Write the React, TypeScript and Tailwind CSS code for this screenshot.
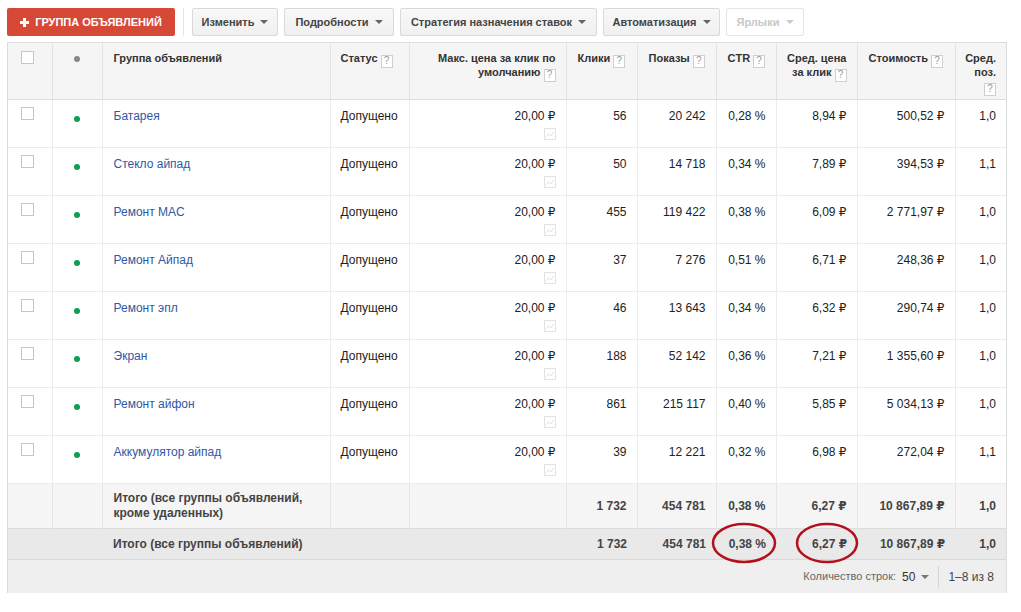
import React from "react";

const rows = [
  { name: "Батарея", clicks: "56", shows: "20 242", ctr: "0,28 %", cpc: "8,94 ₽", cost: "500,52 ₽", pos: "1,0" },
  { name: "Стекло айпад", clicks: "50", shows: "14 718", ctr: "0,34 %", cpc: "7,89 ₽", cost: "394,53 ₽", pos: "1,1" },
  { name: "Ремонт MAC", clicks: "455", shows: "119 422", ctr: "0,38 %", cpc: "6,09 ₽", cost: "2 771,97 ₽", pos: "1,0" },
  { name: "Ремонт Айпад", clicks: "37", shows: "7 276", ctr: "0,51 %", cpc: "6,71 ₽", cost: "248,36 ₽", pos: "1,0" },
  { name: "Ремонт эпл", clicks: "46", shows: "13 643", ctr: "0,34 %", cpc: "6,32 ₽", cost: "290,74 ₽", pos: "1,0" },
  { name: "Экран", clicks: "188", shows: "52 142", ctr: "0,36 %", cpc: "7,21 ₽", cost: "1 355,60 ₽", pos: "1,0" },
  { name: "Ремонт айфон", clicks: "861", shows: "215 117", ctr: "0,40 %", cpc: "5,85 ₽", cost: "5 034,13 ₽", pos: "1,0" },
  { name: "Аккумулятор айпад", clicks: "39", shows: "12 221", ctr: "0,32 %", cpc: "6,98 ₽", cost: "272,04 ₽", pos: "1,1" },
];

function Help() {
  return (
    <span className="ml-[3px] inline-flex h-[13px] w-[12px] items-center justify-center border border-[#cfcfcf] bg-white align-[-2px] text-[10px] font-normal leading-none text-[#999]">
      ?
    </span>
  );
}

function Caret({ color = "#555" }: { color?: string }) {
  return (
    <svg width="8" height="4" viewBox="0 0 8 4" className="ml-[6px] inline-block">
      <path d="M0 0h8L4 4z" fill={color} />
    </svg>
  );
}

function Check() {
  return <span className="inline-block h-[13px] w-[13px] border border-[#c6c6c6] bg-white" />;
}

function ToolButton({ label, w, disabled }: { label: string; w: string; disabled?: boolean }) {
  return (
    <button
      className={`flex h-[28px] items-center justify-center rounded-[2px] border text-[11px] font-bold ${w} ${
        disabled
          ? "border-[#e5e5e5] bg-white text-[#c8c8c8]"
          : "border-[#d9d9d9] bg-gradient-to-b from-[#f8f8f8] to-[#f0f0f0] text-[#444]"
      }`}
    >
      {label}
      <Caret color={disabled ? "#ccc" : "#666"} />
    </button>
  );
}

function ChartIcon() {
  return (
    <svg width="12" height="12" viewBox="0 0 12 12" className="ml-auto mt-[3px] block">
      <rect x="0.5" y="0.5" width="11" height="11" fill="#fff" stroke="#e2e2e2" />
      <path d="M2 9l3-3 2 2 3-4" fill="none" stroke="#e0e0e0" strokeWidth="1" />
    </svg>
  );
}

const td = "border-r border-[#ececec] align-top pt-[7px]";
const tt = "border-r border-[#e6e6e6] align-middle";
const th = "border-r border-[#e2e2e2] align-top pt-[8px] text-[11px] font-bold text-[#333] leading-[14px]";

export default function App() {
  return (
    <div className="relative h-[612px] w-[1021px] bg-white font-['Liberation_Sans','DejaVu_Sans',Arial,sans-serif] text-[12px] text-[#222]">
      {/* toolbar */}
      <div className="flex h-[42px] items-start px-[7px] pt-[8px]">
        <button className="flex h-[28px] w-[168px] items-center justify-center rounded-[2px] bg-[#d64937] text-[11px] font-bold text-white">
          <svg width="9" height="9" viewBox="0 0 9 9" className="mr-[6px]">
            <path d="M3 0h3v3h3v3H6v3H3V6H0V3h3z" fill="#fff" />
          </svg>
          ГРУППА ОБЪЯВЛЕНИЙ
        </button>
        <div className="mx-[8px] h-[28px] w-px bg-[#e5e5e5]" />
        <div className="flex gap-[6px]">
          <ToolButton label="Изменить" w="w-[86px]" />
          <ToolButton label="Подробности" w="w-[110px]" />
          <ToolButton label="Стратегия назначения ставок" w="w-[197px]" />
          <ToolButton label="Автоматизация" w="w-[117px]" />
          <ToolButton label="Ярлыки" w="w-[78px]" disabled />
        </div>
      </div>

      {/* table */}
      <div className="mx-[7px] w-[1000px] border-x border-[#dcdcdc]">
        <table className="w-full table-fixed border-collapse">
          <colgroup>
            <col className="w-[44px]" />
            <col className="w-[50px]" />
            <col className="w-[228px]" />
            <col className="w-[79px]" />
            <col className="w-[157px]" />
            <col className="w-[71px]" />
            <col className="w-[79px]" />
            <col className="w-[60px]" />
            <col className="w-[81px]" />
            <col className="w-[98px]" />
            <col className="w-[51px]" />
          </colgroup>
          <thead>
            <tr className="h-[57px] border-y border-[#dcdcdc] bg-[#f5f5f5]">
              <th className={`${th} pl-[13px] text-left`}>
                <Check />
              </th>
              <th className={`${th} text-center`}>
                <span className="mt-[4px] inline-block h-[6px] w-[6px] rounded-full bg-[#888]" />
              </th>
              <th className={`${th} pl-[11px] text-left`}>Группа объявлений</th>
              <th className={`${th} pl-[10px] text-left`}>
                Статус<Help />
              </th>
              <th className={`${th} pr-[10px] text-right`}>
                Макс. цена за клик по
                <br />
                умолчанию<Help />
              </th>
              <th className={`${th} pl-[11px] text-left`}>
                Клики<Help />
              </th>
              <th className={`${th} pl-[11px] text-left`}>
                Показы<Help />
              </th>
              <th className={`${th} pl-[11px] text-left`}>
                CTR<Help />
              </th>
              <th className={`${th} pr-[10px] text-right`}>
                Сред. цена
                <br />
                за клик<Help />
              </th>
              <th className={`${th} pl-[11px] text-left`}>
                Стоимость<Help />
              </th>
              <th className={`${th} border-r-0 pr-[10px] text-right`}>
                Сред.
                <br />
                поз.
                <br />
                <Help />
              </th>
            </tr>
          </thead>
          <tbody>
            {rows.map((r) => (
              <tr key={r.name} className="h-[48px] border-b border-[#ebebeb] bg-white">
                <td className={`${td} pl-[13px]`}>
                  <Check />
                </td>
                <td className={`${td} text-center`}>
                  <span className="mt-[9px] inline-block h-[6px] w-[6px] rounded-full bg-[#0f9d58]" />
                </td>
                <td className={`${td} pl-[11px] text-[#2f57a6]`}>{r.name}</td>
                <td className={`${td} pl-[10px]`}>Допущено</td>
                <td className={`${td} pr-[10px] text-right`}>
                  20,00 ₽
                  <ChartIcon />
                </td>
                <td className={`${td} pr-[10px] text-right`}>{r.clicks}</td>
                <td className={`${td} pr-[10px] text-right`}>{r.shows}</td>
                <td className={`${td} pr-[10px] text-right`}>{r.ctr}</td>
                <td className={`${td} pr-[10px] text-right`}>{r.cpc}</td>
                <td className={`${td} pr-[10px] text-right`}>{r.cost}</td>
                <td className={`${td} border-r-0 pr-[10px] text-right`}>{r.pos}</td>
              </tr>
            ))}
            <tr className="h-[45px] border-b border-[#dcdcdc] bg-[#f5f5f5] font-bold text-[#444]">
              <td className={tt} />
              <td className={tt} />
              <td className={`${tt} pl-[11px] leading-[15px]`}>
                Итого (все группы объявлений,
                <br />
                кроме удаленных)
              </td>
              <td className={tt} />
              <td className={tt} />
              <td className={`${tt} pr-[10px] text-right`}>1 732</td>
              <td className={`${tt} pr-[10px] text-right`}>454 781</td>
              <td className={`${tt} pr-[10px] text-right`}>0,38 %</td>
              <td className={`${tt} pr-[10px] text-right`}>6,27 ₽</td>
              <td className={`${tt} pr-[10px] text-right`}>10 867,89 ₽</td>
              <td className={`${tt} border-r-0 pr-[10px] text-right`}>1,0</td>
            </tr>
            <tr className="h-[31px] border-b border-[#d9d9d9] bg-[#e9e9e9] font-bold text-[#444]">
              <td />
              <td />
              <td colSpan={3} className="pl-[11px] align-middle">
                Итого (все группы объявлений)
              </td>
              <td className="pr-[10px] text-right align-middle">1 732</td>
              <td className="pr-[10px] text-right align-middle">454 781</td>
              <td className="pr-[10px] text-right align-middle">0,38 %</td>
              <td className="pr-[10px] text-right align-middle">6,27 ₽</td>
              <td className="pr-[10px] text-right align-middle">10 867,89 ₽</td>
              <td className="pr-[10px] text-right align-middle">1,0</td>
            </tr>
          </tbody>
        </table>
        <div className="flex h-[33px] items-center justify-end bg-[#efefef] pr-[12px] text-[11px]">
          <span className="text-[#666]">Количество строк:</span>
          <span className="ml-[6px] text-[12px] text-[#333]">50</span>
          <Caret color="#777" />
          <span className="mx-[9px] h-[22px] w-px bg-[#d5d5d5]" />
          <span className="text-[12px] text-[#444]">1–8 из 8</span>
        </div>
      </div>

      {/* hand-drawn highlight marks */}
      <svg className="pointer-events-none absolute left-0 top-0" width="1021" height="612">
        <ellipse cx="744" cy="543" rx="31" ry="19" fill="none" stroke="#b3101b" strokeWidth="2.5" />
        <ellipse cx="827" cy="543" rx="30" ry="19" fill="none" stroke="#b3101b" strokeWidth="2.5" />
      </svg>
    </div>
  );
}
